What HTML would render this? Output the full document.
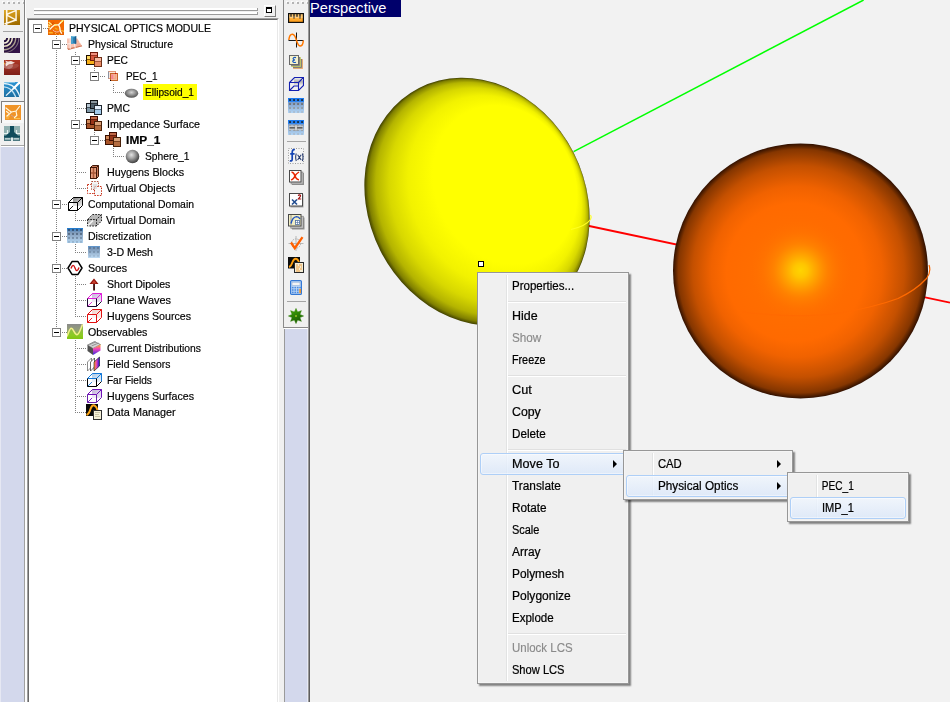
<!DOCTYPE html>
<html><head><meta charset="utf-8"><title>Physical Optics Module</title>
<style>
html,body{margin:0;padding:0}
body{width:950px;height:702px;position:relative;overflow:hidden;background:#f0f0f0;font-family:"Liberation Sans",sans-serif;font-size:11px;color:#000}
div,span,i,svg{position:absolute;box-sizing:border-box;display:block}
/* left toolbar */
#tb1{left:0;top:0;width:24px;height:147px;background:#f0f0f0}
#lav1{left:0;top:147px;width:24px;height:555px;background:#d3d8ec;border-left:1px solid #e6e8f3}
#edge1{left:24px;top:0;width:1px;height:702px;background:linear-gradient(to bottom,#848484 0,#848484 146px,#a0a0a0 147px,#a0a0a0 100%)}
#edge1b{left:25px;top:0;width:1px;height:702px;background:#fdfdfd}
#edge1c{left:26px;top:18px;width:1px;height:684px;background:#fdfdfd}
.grip i{top:2px;width:2px;height:2px;background:#b4b4b4;box-shadow:-1px -1px 0 #fbfbfb}
.tsep{height:1px;background:#a5a5a5}
.tic{width:16px;height:16px}
/* panel */
#panel{left:26px;top:0;width:257px;height:702px;background:#f0f0f0}
.gbar{left:34px;width:224px;height:3px;border-bottom:1px solid #9a9a9a;border-right:1px solid #9a9a9a;background:#fff}
#pbtn{left:264px;top:5px;width:12px;height:12px;border:1px solid;border-color:#fff #808080 #808080 #fff;background:#f0f0f0}
#pbtn i{left:1px;top:1px;width:6px;height:6px;border:1px solid #000;border-top-width:2px;background:#fff}
#treebox{left:27px;top:18px;width:252px;height:690px;border:1px solid #a0a0a0;border-right-color:#fff;background:#fff}
#treebox2{left:28px;top:19px;width:250px;height:690px;border:1px solid #696969;border-right-color:#e8e8e8;background:#fff}
#tree{left:0;top:0;width:283px;height:702px;overflow:hidden;will-change:transform}
.lbl{height:16px;line-height:16px;font-size:11px;white-space:nowrap;transform-origin:0 50%;padding:0 1px;-webkit-text-stroke:.18px #000}
.lbl.b{font-weight:bold}
.lbl.sel{background:#ffff00}
.ic{width:16px;height:16px}
.ic svg{left:0;top:0}
.bx{z-index:2;width:9px;height:9px;border:1px solid #808080;background:#fff}
.bx i{left:1px;top:3px;width:5px;height:1px;background:#000}
.vd{width:1px;background-image:repeating-linear-gradient(to bottom,#808080 0,#808080 1px,transparent 1px,transparent 2px)}
.hd{height:1px;background-image:repeating-linear-gradient(to right,#808080 0,#808080 1px,transparent 1px,transparent 2px)}
/* toolbar 2 */
#gap2{left:280px;top:0;width:3px;height:702px;background:#f0f0f0}
#edge2{left:283px;top:0;width:1px;height:328px;background:#8a8a8a}
#tb2{left:284px;top:0;width:25px;height:327px;background:#f0f0f0}
#tb2b{left:284px;top:327px;width:25px;height:1px;background:#8a8a8a}
#tb2c{left:284px;top:328px;width:25px;height:1px;background:#fff}
#lav2{left:284px;top:329px;width:24px;height:373px;background:#d3d8ec;border-left:1px solid #9a9a9a;border-right:1px solid #e6e9f5}
#edge3{left:308px;top:0;width:2px;height:702px;background:linear-gradient(to right,#989898 0,#989898 50%,#5e5e5e 50%,#5e5e5e 100%)}
/* viewport */
#view{left:310px;top:0;width:640px;height:702px;background:#f2f2f2;overflow:hidden}
#persp{left:0;top:0;width:91px;height:17px;background:#00006b;color:#fff;font-size:15px;line-height:16px;white-space:nowrap}
#persp span{left:0.4px;top:0;transform-origin:0 50%;transform:scaleX(.975)}
/* menus */
.menu{background:#f0f0f0;border:1px solid #979797;box-shadow:2px 2px 1.5px rgba(0,0,0,.45)}
.menu .in{left:0;top:0;right:0;bottom:0;border:1px solid #f5f5f5}
.gut{top:2px;bottom:2px;width:2px;border-left:1px solid #e2e3e3;border-right:1px solid #fff}
.msep{height:2px;border-top:1px solid #e0e0e0;border-bottom:1px solid #fff}
.hl{height:22px;border:1px solid #aecff7;border-radius:3px;background:linear-gradient(to bottom,rgba(240,246,254,.8) 0,rgba(219,232,250,.8) 100%);box-shadow:inset 0 0 0 1px rgba(255,255,255,.45)}
.mi{height:22px;line-height:22px;font-size:12px;white-space:nowrap;transform-origin:0 50%;padding:0 1px;color:#000;-webkit-text-stroke:.22px #000}
.mi.dis{color:#8a8a8a;-webkit-text-stroke:.15px #8a8a8a}
.arr{width:0;height:0;border-style:solid;border-width:4px 0 4px 4px;border-color:transparent transparent transparent #000}
#mtext{left:0;top:0;width:950px;height:702px;will-change:transform}

</style></head><body>
<div id="tb1"></div>
<div id="lav1"></div>
<div class="grip" style="left:0;top:0;width:24px;height:6px"><i style="left:3px"></i><i style="left:8px"></i><i style="left:13px"></i><i style="left:18px"></i><i style="left:23px;width:1px"></i></div>
<div class="tsep" style="left:3px;top:31px;width:20px"></div>
<div style="left:1px;top:101px;width:23px;height:22px;border-left:1px solid #808080;border-top:1px solid #808080;background:#f8f8f8"></div>
<div class="tsep" style="left:1px;top:145px;width:23px"></div>
<div style="left:1px;top:146px;width:23px;height:1px;background:#fff"></div>
<div id="edge1"></div><div id="edge1b"></div>
<div id="panel"></div>
<div class="gbar" style="top:8px"></div>
<div class="gbar" style="top:12px"></div>
<div id="pbtn"><i></i></div>
<div id="edge1c"></div><div id="treebox"></div><div id="treebox2"></div>
<div id="gap2"></div><div id="edge2"></div>
<div id="tb2"></div><div id="tb2b"></div><div id="tb2c"></div><div id="lav2"></div>
<div class="grip" style="left:284px;top:0;width:25px;height:6px"><i style="left:3px"></i><i style="left:8px"></i><i style="left:13px"></i><i style="left:18px"></i><i style="left:23px;width:1px"></i></div>
<div class="tsep" style="left:287px;top:141px;width:19px"></div>
<div class="tsep" style="left:287px;top:301px;width:19px"></div>
<div id="edge3"></div>

<svg class="tic" style="left:4px;top:10px;width:16px;height:15px" width="16" height="15" viewBox="0 0 16 15"><defs><linearGradient id="t1" x1="0" y1="0" x2=".3" y2="1"><stop offset="0" stop-color="#dca828"/><stop offset=".55" stop-color="#c08810"/><stop offset="1" stop-color="#a06c00"/></linearGradient></defs><rect width="16" height="16" fill="url(#t1)"/><path d="M2.7 0 V16 M2.5 4.6 L12 0.6 V10 L2.5 4.8 M12 10 L0.5 14" fill="none" stroke="#fff8e8" stroke-width="1.6"/><path d="M3.5 5 L11.3 1.6 V8.8 Z" fill="#d09818" opacity=".6"/></svg>
<svg class="tic" style="left:4px;top:38px;width:16px;height:15px" width="16" height="15" viewBox="0 0 16 15"><defs><linearGradient id="t2" x1="0" y1="0" x2="1" y2="1"><stop offset="0" stop-color="#20103c"/><stop offset="1" stop-color="#38164c"/></linearGradient><clipPath id="t2c"><rect width="16" height="16"/></clipPath></defs><rect width="16" height="16" fill="url(#t2)"/><g fill="none" clip-path="url(#t2c)"><circle cx="0" cy="0" r="2.2" fill="#f4f0e0" stroke="none"/><circle cx="0" cy="0" r="5" stroke="#f4efd8" stroke-width="1.7"/><circle cx="0" cy="0" r="8.3" stroke="#e6dec0" stroke-width="1.6"/><circle cx="0" cy="0" r="11.7" stroke="#aca090" stroke-width="1.4"/><circle cx="0" cy="0" r="14.8" stroke="#7a6a78" stroke-width="1.1"/></g></svg>
<svg class="tic" style="left:4px;top:60px;width:16px;height:15px" width="16" height="15" viewBox="0 0 16 15"><defs><linearGradient id="t3" x1="0" y1="0" x2="0" y2="1"><stop offset="0" stop-color="#ac3422"/><stop offset=".5" stop-color="#942c22"/><stop offset="1" stop-color="#7c1c18"/></linearGradient></defs><rect width="16" height="16" fill="url(#t3)"/><ellipse cx="4" cy="5.5" rx="5" ry="3.6" fill="#fff" opacity=".28"/><ellipse cx="9" cy="6.5" rx="6" ry="2.2" fill="#fff" opacity=".12" transform="rotate(-12 9 6.5)"/><path d="M0.8 0.6 L4 1.6 L7 1 L11 2.8 L8 4 L5 4.3 L2 6.5 L1.5 4 L2.5 2.4 Z" fill="#f8ece8" opacity=".9"/><path d="M0 3 L0.8 2.6 L0.8 4 L0 4.4 Z" fill="#e8b020"/></svg>
<svg class="tic" style="left:4px;top:82px;width:16px;height:15px" width="16" height="15" viewBox="0 0 16 15"><defs><linearGradient id="t4" x1="0" y1="0" x2="0" y2="1"><stop offset="0" stop-color="#2c94d4"/><stop offset="1" stop-color="#1c6c9c"/></linearGradient><clipPath id="t4c"><rect width="16" height="16"/></clipPath></defs><rect width="16" height="16" fill="url(#t4)"/><g fill="none" clip-path="url(#t4c)"><path d="M0 0.4 H11" stroke="#7cc0e4" stroke-width="1.2"/><path d="M0 1.5 Q9 2 12.7 8.2 T15.6 15.5" stroke="#e4f2fa" stroke-width="1.4"/><path d="M0 4.8 Q6.5 5.4 9.6 10.9 T11.6 15.8" stroke="#c4e2f2" stroke-width="1.3"/><path d="M16 -0.2 L9 7" stroke="#ffffff" stroke-width="2.2"/><path d="M9.5 6.5 L2 13.6" stroke="#f0f8fc" stroke-width="1.3"/></g></svg>
<svg class="tic" style="left:5px;top:105px;width:16px;height:15px" width="16" height="15" viewBox="0 0 16 15"><rect width="16" height="16" fill="#f09428"/><path d="M1 11 H5 M9 13.5 H15 M1 13 H4" stroke="#ffc850" stroke-width="1.2" opacity=".9"/><path d="M14.5 1.5 L11 6 L6.5 7 L2 11 M11 6 L11.8 10.5 L9.5 12.5 M1 3 L4 5.5 L6.5 7 M1.5 6.5 L3.5 8" stroke="#fff6e0" stroke-width="1.2" fill="none" stroke-linecap="round"/><path d="M6 10 L9 12" stroke="#d0a090" stroke-width="1"/></svg>
<svg class="tic" style="left:4px;top:126px;width:16px;height:15px" width="16" height="15" viewBox="0 0 16 15"><rect width="16" height="16" fill="#90b0b0"/><rect y="10" width="16" height="6" fill="#4c7880"/><path d="M6 0 H10 V6 L14 9.5 H16 V11.5 H0 V9.5 H2 L6 6 Z" fill="#104c5c"/><path d="M0 7.5 H3.5 V4 M16 7.5 H12.5 V4" fill="none" stroke="#e4f0f0" stroke-width="1.2"/><path d="M1 12.8 H6.5 M9.5 12.8 H15" stroke="#d8e8e8" stroke-width="1.3"/><rect x="7" y="11.5" width="2" height="4.5" fill="#e0ecec"/></svg>
<svg class="tic" style="left:288px;top:13px;width:16px;height:10px" width="16" height="10" viewBox="0 0 16 10"><defs><linearGradient id="r1" x1="0" y1="0" x2="0" y2="1"><stop offset="0" stop-color="#ffd488"/><stop offset=".45" stop-color="#ffb848"/><stop offset="1" stop-color="#ff9810"/></linearGradient></defs><rect x=".6" y=".6" width="14.8" height="8.8" fill="url(#r1)" stroke="#101010" stroke-width="1.2"/><path d="M3 1 V4 M6 1 V5.5 M9 1 V4 M12 1 V5.5" stroke="#101010" stroke-width="1.2"/><rect x="1.2" y="3.6" width="13.6" height="1" fill="#fff" opacity=".45"/></svg>
<svg class="tic" style="left:288px;top:32px;width:16px;height:16px" width="16" height="16" viewBox="0 0 16 16"><path d="M8.5 0.5 V15.5 M0.5 8.5 H15.5" stroke="#181818" stroke-width="1"/><path d="M0.8 8 Q1.5 2 4.5 2.2 Q7 2.5 8.5 8.5 Q10 14 12.5 14 Q15 13.5 15.3 8.5" fill="none" stroke="#ff7800" stroke-width="1.5"/></svg>
<svg class="tic" style="left:288px;top:54px;width:16px;height:16px" width="16" height="16" viewBox="0 0 16 16"><rect x="5.5" y="5.5" width="9" height="9" fill="#c8c0a8" stroke="#f08020" stroke-dasharray="1 1"/><rect x="3.5" y="3.5" width="9" height="9" fill="#d8d8b0" stroke="#a8b820" stroke-dasharray="1 1"/><rect x="1.5" y="1.5" width="9" height="9" fill="#f6f2cc" stroke="#686868"/><path d="M8 3.6 Q5.5 3 5 4.6 Q5 5.8 7 6 Q4.6 6.2 4.8 7.6 Q5.4 9 8 8.2" fill="none" stroke="#1858c0" stroke-width="1.2"/><path d="M11.5 3 V11.5 H3 M13.5 5 V13.5 H5" fill="none" stroke="#707070" stroke-width=".8"/></svg>
<svg class="tic" style="left:288px;top:76px;width:16px;height:16px" width="16" height="16" viewBox="0 0 16 16"><defs><linearGradient id="r4" x1="0" y1="0" x2="0" y2="1"><stop offset="0" stop-color="#f8f8f8"/><stop offset=".6" stop-color="#b0b0b0"/><stop offset="1" stop-color="#e8e8e8"/></linearGradient></defs><rect x="6" y="1" width="10" height="8" fill="url(#r4)"/><path d="M1.5 6.5 L6.5 1.5 H15.5 V9.5 L10.5 14.5 H1.5 Z M1.5 6.5 H10.5 V14.5 M10.5 6.5 L15.5 1.5 M1.5 14.5 L6 10 H10" fill="none" stroke="#1420b0" stroke-width="1.1"/></svg>
<svg class="tic" style="left:288px;top:98px;width:16px;height:15px" width="16" height="15" viewBox="0 0 16 15"><defs><linearGradient id="r5" x1="0" y1="0" x2="0" y2="1"><stop offset="0" stop-color="#1878f0"/><stop offset=".22" stop-color="#2c84f0"/><stop offset=".27" stop-color="#7c9cc8"/><stop offset=".6" stop-color="#98b8dc"/><stop offset="1" stop-color="#b8dcfc"/></linearGradient></defs><rect width="16" height="16" fill="url(#r5)"/><rect x="1.1" y="1.1" width="1.9" height="1.9" fill="#182838" opacity="0.9"/><rect x="5.1" y="1.1" width="1.9" height="1.9" fill="#182838" opacity="0.9"/><rect x="9.1" y="1.1" width="1.9" height="1.9" fill="#182838" opacity="0.9"/><rect x="13.1" y="1.1" width="1.9" height="1.9" fill="#182838" opacity="0.9"/><rect x="1.1" y="5.1" width="1.9" height="1.9" fill="#6c6458" opacity="0.75"/><rect x="5.1" y="5.1" width="1.9" height="1.9" fill="#6c6458" opacity="0.75"/><rect x="9.1" y="5.1" width="1.9" height="1.9" fill="#6c6458" opacity="0.75"/><rect x="13.1" y="5.1" width="1.9" height="1.9" fill="#6c6458" opacity="0.75"/><rect x="1.1" y="9.1" width="1.9" height="1.9" fill="#8c8880" opacity="0.6"/><rect x="5.1" y="9.1" width="1.9" height="1.9" fill="#8c8880" opacity="0.6"/><rect x="9.1" y="9.1" width="1.9" height="1.9" fill="#8c8880" opacity="0.6"/><rect x="13.1" y="9.1" width="1.9" height="1.9" fill="#8c8880" opacity="0.6"/><rect x="1.1" y="13.1" width="1.9" height="1.9" fill="#a8acb4" opacity="0.5"/><rect x="5.1" y="13.1" width="1.9" height="1.9" fill="#a8acb4" opacity="0.5"/><rect x="9.1" y="13.1" width="1.9" height="1.9" fill="#a8acb4" opacity="0.5"/><rect x="13.1" y="13.1" width="1.9" height="1.9" fill="#a8acb4" opacity="0.5"/></svg>
<svg class="tic" style="left:288px;top:120px;width:16px;height:15px" width="16" height="15" viewBox="0 0 16 15"><defs><linearGradient id="r6" x1="0" y1="0" x2="0" y2="1"><stop offset="0" stop-color="#1878f0"/><stop offset=".22" stop-color="#2c84f0"/><stop offset=".27" stop-color="#7c9cc8"/><stop offset=".6" stop-color="#98b8dc"/><stop offset="1" stop-color="#b8dcfc"/></linearGradient></defs><rect width="16" height="16" fill="url(#r6)"/><rect x="1.1" y="1.1" width="1.9" height="1.9" fill="#182838" opacity="0.9"/><rect x="5.1" y="1.1" width="1.9" height="1.9" fill="#182838" opacity="0.9"/><rect x="9.1" y="1.1" width="1.9" height="1.9" fill="#182838" opacity="0.9"/><rect x="13.1" y="1.1" width="1.9" height="1.9" fill="#182838" opacity="0.9"/><rect x="1.1" y="5.1" width="1.9" height="1.9" fill="#6c6458" opacity="0.75"/><rect x="5.1" y="5.1" width="1.9" height="1.9" fill="#6c6458" opacity="0.75"/><rect x="9.1" y="5.1" width="1.9" height="1.9" fill="#6c6458" opacity="0.75"/><rect x="13.1" y="5.1" width="1.9" height="1.9" fill="#6c6458" opacity="0.75"/><rect x="1.1" y="9.1" width="1.9" height="1.9" fill="#8c8880" opacity="0.6"/><rect x="5.1" y="9.1" width="1.9" height="1.9" fill="#8c8880" opacity="0.6"/><rect x="9.1" y="9.1" width="1.9" height="1.9" fill="#8c8880" opacity="0.6"/><rect x="13.1" y="9.1" width="1.9" height="1.9" fill="#8c8880" opacity="0.6"/><rect x="1.1" y="13.1" width="1.9" height="1.9" fill="#a8acb4" opacity="0.5"/><rect x="5.1" y="13.1" width="1.9" height="1.9" fill="#a8acb4" opacity="0.5"/><rect x="9.1" y="13.1" width="1.9" height="1.9" fill="#a8acb4" opacity="0.5"/><rect x="13.1" y="13.1" width="1.9" height="1.9" fill="#a8acb4" opacity="0.5"/><rect x="1" y="5.5" width="14" height="4.6" fill="#c4c8cc"/><rect x="1.5" y="7.2" width="13" height="1.3" fill="#484848"/><rect x="7" y="5" width="2" height="5.6" fill="#e8e8e8" stroke="#808080" stroke-width=".5"/></svg>
<svg class="tic" style="left:288px;top:148px;width:16px;height:16px" width="16" height="16" viewBox="0 0 16 16"><rect x=".5" y=".5" width="15" height="15" fill="#f4f4f4" stroke="#9c9c9c" stroke-dasharray="1 1.5"/><path d="M6.8 1.8 Q4.2 1 4.2 4.5 V11 Q4.2 13.5 1.8 12.8 M2.2 5.8 H6.6" fill="none" stroke="#1444b4" stroke-width="1.7"/><path d="M8.3 5.5 Q7 9 8.3 13 M14.4 5.5 Q15.6 9 14.4 13 M9.6 6.8 L13.2 12 M13.2 6.8 L9.6 12" fill="none" stroke="#283c70" stroke-width="1.1"/></svg>
<svg class="tic" style="left:288px;top:169px;width:17px;height:17px" width="17" height="17" viewBox="0 0 17 17"><rect x="4" y="4" width="12" height="12" fill="#909090"/><rect x="3" y="3" width="12" height="12" fill="#c4c4c4" stroke="#808080" stroke-width=".6"/><rect x="1.5" y="1.5" width="11.5" height="11.5" fill="#fff" stroke="#484848"/><path d="M3.5 3.3 Q5.5 3 7 7 Q8.5 11 11 10.6 M11 3 Q8 5 7 7 Q6 9.5 3.2 11.2" fill="none" stroke="#e82400" stroke-width="1.5"/></svg>
<svg class="tic" style="left:288px;top:192px;width:17px;height:16px" width="17" height="16" viewBox="0 0 17 16"><rect x="2.5" y="2.5" width="13" height="13" fill="#a8a8a8"/><rect x="1.5" y="1.5" width="13" height="12.5" fill="#fff" stroke="#484848"/><path d="M4 7.5 L9 12.5 M9 7.5 L4 12.5" stroke="#204c90" stroke-width="1.6"/><path d="M10.3 3.8 Q10.6 2.6 11.8 2.8 Q13 3.2 12.2 4.6 L10.4 7 H13.2" fill="none" stroke="#a01010" stroke-width="1.2"/></svg>
<svg class="tic" style="left:288px;top:213px;width:17px;height:17px" width="17" height="17" viewBox="0 0 17 17"><rect x="4" y="4.5" width="12.5" height="12" fill="#909090"/><rect x="2.8" y="3.2" width="12.5" height="12" fill="#c0c0c0" stroke="#787878" stroke-width=".6"/><rect x=".5" y="1.5" width="12.5" height="11.5" fill="#f2eec4" stroke="#484848"/><path d="M3 2.5 V12" stroke="#404040" stroke-dasharray="1 1"/><path d="M3 10.5 Q4.5 4 8.5 3.6 Q11 3.6 12 6" fill="none" stroke="#1c50c0" stroke-width="1.4"/><rect x="7.5" y="7.5" width="4" height="4" fill="#fff" stroke="#5070a0" stroke-width=".8"/><path d="M9.5 7.5 V11.5 M7.5 9.5 H11.5" stroke="#5070a0" stroke-width=".6"/></svg>
<svg class="tic" style="left:288px;top:235px;width:16px;height:16px" width="16" height="16" viewBox="0 0 16 16"><circle cx="8" cy="8.5" r="4.6" fill="none" stroke="#a8a8a8" stroke-width="1" stroke-dasharray="1.5 1"/><path d="M8 1 V16 M0.5 8.5 H15.5" stroke="#b0b0b0" stroke-width=".9"/><path d="M3 7.5 L6.8 13.2 L14.5 2.2" fill="none" stroke="#ff6000" stroke-width="2.3" stroke-linejoin="miter"/></svg>
<svg class="tic" style="left:288px;top:257px;width:16px;height:16px" width="16" height="16" viewBox="0 0 16 16"><rect x="0" y="0" width="12" height="11.5" fill="#0c0c0c"/><path d="M1 10 Q3 9.5 4.5 5 Q6 1 8.5 1.8 Q10.5 2.8 11.5 7" fill="none" stroke="#ffa010" stroke-width="1.9"/><rect x="6.5" y="5.5" width="9" height="10" fill="#f4ecd4" stroke="#282828"/><path d="M8 8 H10 M11 8 H14 M8 10 H12 M13 10 H14 M8 12 H11 M12 12 H14 M8 14 H12" stroke="#f0a040" stroke-width="1"/></svg>
<svg class="tic" style="left:290px;top:280px;width:12px;height:15px" width="12" height="15" viewBox="0 0 12 15"><rect x=".6" y=".6" width="10.8" height="13.8" rx="1" fill="#c4dcf8" stroke="#3478d4" stroke-width="1.2"/><rect x="2" y="2.2" width="8" height="3.4" fill="#f4f4f4" stroke="#8cacd8" stroke-width=".6"/><g fill="#4c8ce0"><rect x="1.9" y="6.8" width="1.7" height="1.6"/><rect x="4.4" y="6.8" width="1.7" height="1.6"/><rect x="6.9" y="6.8" width="1.7" height="1.6"/><rect x="1.9" y="9.2" width="1.7" height="1.6"/><rect x="4.4" y="9.2" width="1.7" height="1.6"/><rect x="6.9" y="9.2" width="1.7" height="1.6"/><rect x="1.9" y="11.6" width="1.7" height="1.6"/><rect x="4.4" y="11.6" width="1.7" height="1.6"/><rect x="6.9" y="11.6" width="1.7" height="1.6"/></g><rect x="9.3" y="8.8" width="1.6" height="4.4" fill="#f09020"/><rect x="9.3" y="6.8" width="1.6" height="1.4" fill="#4c8ce0"/></svg>
<svg class="tic" style="left:288px;top:308px;width:16px;height:16px" width="16" height="16" viewBox="0 0 16 16"><defs><linearGradient id="r14" x1="0" y1="0" x2=".4" y2="1"><stop offset="0" stop-color="#58bc08"/><stop offset=".5" stop-color="#2c8404"/><stop offset="1" stop-color="#1c5c04"/></linearGradient></defs><polygon points="8.00,0.40 9.61,4.12 13.37,2.63 11.88,6.39 15.60,8.00 11.88,9.61 13.37,13.37 9.61,11.88 8.00,15.60 6.39,11.88 2.63,13.37 4.12,9.61 0.40,8.00 4.12,6.39 2.63,2.63 6.39,4.12" fill="url(#r14)" stroke="#2c7c08" stroke-width=".5"/><circle cx="8" cy="8" r=".8" fill="#e8f040"/></svg>
<div id="tree">
<div class="ic" style="left:48px;top:20px;height:15px;overflow:hidden"><svg width="16" height="16" viewBox="0 0 16 16"><defs><linearGradient id="rg" x1="0" y1="0" x2="0" y2="1"><stop offset="0" stop-color="#f46800"/><stop offset=".7" stop-color="#f06a04"/><stop offset="1" stop-color="#e46000"/></linearGradient></defs><rect x="0" y="0" width="16" height="15" fill="url(#rg)"/><path d="M0.5 12.3 Q2.8 11 5.2 12.4 L5 13.4 H0.8 Z" fill="#ffb828"/><path d="M13 10.2 L16 10.8 V11.8 L13.2 11 Z" fill="#ffd040"/><path d="M7 13 L8.4 14.6 M11 13.8 L11.6 14.9" stroke="#ffc030" stroke-width="1"/><circle cx="8" cy="9.2" r="3.2" fill="#f87808" opacity=".8"/><path d="M7 8 L9.5 9.6" stroke="#f0b020" stroke-width="1.2"/><path d="M0.6 2 L3.8 4.8 M0.3 4.6 L2.2 6 M0.2 7 L1.6 8" stroke="#fff08a" stroke-width="1.3" fill="none"/><path d="M3.6 2.6 L5.2 4.2 M5.2 2.4 L6.4 3.6" stroke="#d04800" stroke-width="1" fill="none"/><path d="M4.8 10 Q6.5 11.8 8.5 12 Q10.5 12.2 11.5 11" stroke="#f4b4a4" stroke-width="1" fill="none"/><path d="M15 0.2 L10.6 4.7 L6.6 5 L4.3 6.8 L1.6 9.6 M10.6 4.7 L11.8 7.6 L12.2 11 L13.8 13.6" stroke="#fffbe8" stroke-width="1.35" fill="none" stroke-linejoin="round"/><path d="M15.4 0 L13 2.4 M6.4 4.9 L8.6 4.9" stroke="#fff060" stroke-width="1.1" fill="none"/></svg></div>
<span class="lbl" style="left:67.5px;top:20px;transform:scaleX(0.9590)">PHYSICAL OPTICS MODULE</span>
<div class="bx" style="left:33px;top:24px"><i></i></div>
<div class="ic" style="left:67px;top:36px;height:16px;overflow:hidden"><svg width="16" height="16" viewBox="0 0 16 16"><path d="M0 2.4 H10.4 L15.2 10.3 L1.2 14 L0 11.8 Z" fill="#f8c4b4"/><path d="M0 11.8 L1.2 14 L15.2 10.3 L14.6 9.3 L1.2 12.6 Z" fill="#d07858"/><path d="M0 8 L13 6.6 M6.5 2.4 L8.2 12 M3 2.4 L3.2 13" stroke="#fdece6" stroke-width="1" fill="none"/><path d="M9.5 2.6 L14.5 9.6 L10 10.5 L8 3 Z" fill="#f0a890" opacity=".7"/><rect x="4" y="0" width="5.2" height="7.7" fill="#2c80b4"/><rect x="4" y="0" width="2" height="7.7" fill="#4aa0cc"/><rect x="7.8" y="0" width="1.4" height="7.7" fill="#1c5c8c"/><path d="M4 .6 L6.6 -.3 L9.2 .6 L6.6 1.3 Z" fill="#7cc0e0"/></svg></div>
<span class="lbl" style="left:86.5px;top:36px;transform:scaleX(0.9594)">Physical Structure</span>
<div class="bx" style="left:52px;top:40px"><i></i></div>
<div class="ic" style="left:86px;top:52px;height:16px;overflow:hidden"><svg width="16" height="16" viewBox="0 0 16 16"><rect x="0.5" y="3.5" width="8" height="9" fill="#f8b018" stroke="#201000" stroke-width="1"/><rect x="1" y="4" width="7" height="3" fill="#ffd860"/><rect x="1" y="7" width="7" height="1" fill="#201000" opacity=".55"/><rect x="4.5" y="0.5" width="7" height="8" fill="#d85840" stroke="#701808" stroke-width="1"/><rect x="5" y="1" width="6" height="2" fill="#f09080"/><rect x="5" y="3" width="6" height="1" fill="#701808" opacity=".55"/><rect x="8.5" y="5.5" width="7" height="9" fill="#e88c68" stroke="#703018" stroke-width="1"/><rect x="9" y="6" width="6" height="3" fill="#f8b8a0"/><rect x="9" y="9" width="6" height="1" fill="#703018" opacity=".55"/></svg></div>
<span class="lbl" style="left:105.5px;top:52px;transform:scaleX(0.9295)">PEC</span>
<div class="bx" style="left:71px;top:56px"><i></i></div>
<div class="ic" style="left:105px;top:68px;height:16px;overflow:hidden"><svg width="16" height="16" viewBox="0 0 16 16"><rect x="3.5" y="3.5" width="7" height="7" fill="#fbe4d8" stroke="#e09878"/><path d="M3.5 3.5 V10.5" stroke="#8c94a4"/><rect x="5.5" y="5.5" width="7" height="7" fill="#f4a888" fill-opacity=".85" stroke="#c46428"/><rect x="6.2" y="6.5" width="2" height="4.5" fill="#f87890" opacity=".8"/><rect x="5" y="12" width="1" height="1" fill="#100000"/><rect x="10" y="5" width="1.2" height="1" fill="#d01010"/></svg></div>
<span class="lbl" style="left:124.9px;top:68px;transform:scaleX(0.9067)">PEC_1</span>
<div class="bx" style="left:90px;top:72px"><i></i></div>
<div class="ic" style="left:124px;top:84px;height:16px;overflow:hidden"><svg width="16" height="16" viewBox="0 0 16 16"><defs><radialGradient id="eg" cx=".5" cy=".4" r=".62"><stop offset="0" stop-color="#d4d4d4"/><stop offset=".5" stop-color="#909090"/><stop offset="1" stop-color="#484848"/></radialGradient></defs><ellipse cx="7.5" cy="9.3" rx="6.7" ry="4.5" fill="url(#eg)"/></svg></div>
<div style="left:143px;top:84px;width:54px;height:16px;background:#ffff00"></div>
<span class="lbl" style="left:143.5px;top:84px;transform:scaleX(0.9214)">Ellipsoid_1</span>
<div class="ic" style="left:86px;top:100px;height:16px;overflow:hidden"><svg width="16" height="16" viewBox="0 0 16 16"><rect x="0.5" y="3.5" width="8" height="9" fill="#8098a8" stroke="#181c20" stroke-width="1"/><rect x="1" y="4" width="7" height="3" fill="#b8c8d4"/><rect x="1" y="7" width="7" height="1" fill="#181c20" opacity=".55"/><rect x="4.5" y="0.5" width="7" height="8" fill="#50606c" stroke="#101418" stroke-width="1"/><rect x="5" y="1" width="6" height="2" fill="#8c98a0"/><rect x="5" y="3" width="6" height="1" fill="#101418" opacity=".55"/><rect x="8.5" y="5.5" width="7" height="9" fill="#a4cced" stroke="#202830" stroke-width="1"/><rect x="9" y="6" width="6" height="3" fill="#e4f0fc"/><rect x="9" y="9" width="6" height="1" fill="#202830" opacity=".55"/></svg></div>
<span class="lbl" style="left:105.5px;top:100px;transform:scaleX(0.9423)">PMC</span>
<div class="ic" style="left:86px;top:116px;height:16px;overflow:hidden"><svg width="16" height="16" viewBox="0 0 16 16"><rect x="0.5" y="3.5" width="8" height="9" fill="#a85428" stroke="#381000" stroke-width="1"/><rect x="1" y="4" width="7" height="3" fill="#d08858"/><rect x="1" y="7" width="7" height="1" fill="#381000" opacity=".55"/><rect x="4.5" y="0.5" width="7" height="8" fill="#983418" stroke="#400c00" stroke-width="1"/><rect x="5" y="1" width="6" height="2" fill="#c06848"/><rect x="5" y="3" width="6" height="1" fill="#400c00" opacity=".55"/><rect x="8.5" y="5.5" width="7" height="9" fill="#b46c40" stroke="#482008" stroke-width="1"/><rect x="9" y="6" width="6" height="3" fill="#d8a078"/><rect x="9" y="9" width="6" height="1" fill="#482008" opacity=".55"/></svg></div>
<span class="lbl" style="left:105.5px;top:116px;transform:scaleX(0.9757)">Impedance Surface</span>
<div class="bx" style="left:71px;top:120px"><i></i></div>
<div class="ic" style="left:105px;top:132px;height:16px;overflow:hidden"><svg width="16" height="16" viewBox="0 0 16 16"><rect x="0.5" y="3.5" width="8" height="9" fill="#a85428" stroke="#381000" stroke-width="1"/><rect x="1" y="4" width="7" height="3" fill="#d08858"/><rect x="1" y="7" width="7" height="1" fill="#381000" opacity=".55"/><rect x="4.5" y="0.5" width="7" height="8" fill="#983418" stroke="#400c00" stroke-width="1"/><rect x="5" y="1" width="6" height="2" fill="#c06848"/><rect x="5" y="3" width="6" height="1" fill="#400c00" opacity=".55"/><rect x="8.5" y="5.5" width="7" height="9" fill="#b46c40" stroke="#482008" stroke-width="1"/><rect x="9" y="6" width="6" height="3" fill="#d8a078"/><rect x="9" y="9" width="6" height="1" fill="#482008" opacity=".55"/></svg></div>
<span class="lbl b" style="left:124.9px;top:132px;transform:scaleX(1.0813)">IMP_1</span>
<div class="bx" style="left:90px;top:136px"><i></i></div>
<div class="ic" style="left:124px;top:148px;height:16px;overflow:hidden"><svg width="16" height="16" viewBox="0 0 16 16"><defs><radialGradient id="sg" cx=".42" cy=".38" r=".62"><stop offset="0" stop-color="#e4e4e4"/><stop offset=".45" stop-color="#a0a0a0"/><stop offset="1" stop-color="#404040"/></radialGradient></defs><circle cx="8.5" cy="8.5" r="6.8" fill="url(#sg)"/></svg></div>
<span class="lbl" style="left:143.5px;top:148px;transform:scaleX(0.9354)">Sphere_1</span>
<div class="ic" style="left:86px;top:164px;height:16px;overflow:hidden"><svg width="16" height="16" viewBox="0 0 16 16"><path d="M4.5 3.5 L6.5 1.5 H12.5 V12.5 L10.5 14.5 H4.5 Z" fill="#c87858" stroke="#401808"/><rect x="4.5" y="3.5" width="6" height="11" fill="#e8a080" stroke="#401808"/><path d="M7.5 4 V14 M5 9 H10" stroke="#a85838" stroke-width="1.6"/><path d="M10.5 3.5 L12.5 1.5" stroke="#401808"/></svg></div>
<span class="lbl" style="left:105.5px;top:164px;transform:scaleX(0.9772)">Huygens Blocks</span>
<div class="ic" style="left:86px;top:180px;height:16px;overflow:hidden"><svg width="16" height="16" viewBox="0 0 16 16"><rect x="1.5" y="4.5" width="8" height="9" fill="#fff" stroke="#c83018" stroke-dasharray="1.5 1.2"/><rect x="5.5" y="1.5" width="7" height="8" fill="#f4f4f4" stroke="#b05038" stroke-dasharray="1.5 1.2"/><rect x="8.5" y="6.5" width="7" height="9" fill="#fafafa" stroke="#c83018" stroke-dasharray="1.5 1.2"/><rect x="7" y="4" width="4" height="5" fill="#d8d8d8" opacity=".7"/></svg></div>
<span class="lbl" style="left:104.9px;top:180px;transform:scaleX(0.9712)">Virtual Objects</span>
<div class="ic" style="left:67px;top:196px;height:16px;overflow:hidden"><svg width="16" height="16" viewBox="0 0 16 16"><defs><linearGradient id="g40656" x1="0" y1="0" x2="1" y2="1"><stop offset="0" stop-color="#7c7c7c"/><stop offset="1" stop-color="#f4f4f4"/></linearGradient></defs><rect x="6" y="1" width="10" height="9" fill="url(#g40656)"/><rect x="1.5" y="6.5" width="9" height="8" fill="#fff" fill-opacity=".55" stroke="none"/><path d="M1.5 6.5 L6.5 1.5 H15.5 V9.5 M10.5 6.5 L15.5 1.5 M1.5 6.5 H10.5" fill="none" stroke="#000"/><path d="M1.5 14.5 L6 10" fill="none" stroke="#000" stroke-width=".9"/><path d="M1.5 6.5 V14.5 H10.5 V6.5 M10.5 14.5 L15.5 9.5" fill="none" stroke="#000"/></svg></div>
<span class="lbl" style="left:86.5px;top:196px;transform:scaleX(0.9478)">Computational Domain</span>
<div class="bx" style="left:52px;top:200px"><i></i></div>
<div class="ic" style="left:86px;top:212px;height:16px;overflow:hidden"><svg width="16" height="16" viewBox="0 0 16 16"><path d="M1.5 7.5 L6.5 2.5 H15.5 V9 L10.5 14 H1.5 Z" fill="#b8b8b8"/><path d="M6.5 2.5 H15.5 V9 L10.5 14 H1.5 V7.5 Z M1.5 7.5 H10.5 L15.5 2.5 M10.5 7.5 V14" fill="none" stroke="#202020" stroke-dasharray="1.6 1.2"/><path d="M2 13.5 L7 8.5" stroke="#f4f4f4" stroke-width="1.6"/></svg></div>
<span class="lbl" style="left:104.9px;top:212px;transform:scaleX(0.9626)">Virtual Domain</span>
<div class="ic" style="left:67px;top:228px;height:15px;overflow:hidden"><svg width="16" height="16" viewBox="0 0 16 16"><defs><linearGradient id="m89523" x1="0" y1="0" x2="0" y2="1"><stop offset="0" stop-color="#1878d0"/><stop offset=".25" stop-color="#7c98b8"/><stop offset=".6" stop-color="#9cb8d4"/><stop offset="1" stop-color="#b8dcf8"/></linearGradient></defs><rect x="0" y="0" width="16" height="16" fill="url(#m89523)"/><rect x="1.1" y="1.1" width="1.8" height="1.8" fill="#28384c" opacity="0.75"/><rect x="5.1" y="1.1" width="1.8" height="1.8" fill="#28384c" opacity="0.75"/><rect x="9.1" y="1.1" width="1.8" height="1.8" fill="#28384c" opacity="0.75"/><rect x="13.1" y="1.1" width="1.8" height="1.8" fill="#28384c" opacity="0.75"/><rect x="1.1" y="5.1" width="1.8" height="1.8" fill="#28384c" opacity="0.57"/><rect x="5.1" y="5.1" width="1.8" height="1.8" fill="#28384c" opacity="0.57"/><rect x="9.1" y="5.1" width="1.8" height="1.8" fill="#28384c" opacity="0.57"/><rect x="13.1" y="5.1" width="1.8" height="1.8" fill="#28384c" opacity="0.57"/><rect x="1.1" y="9.1" width="1.8" height="1.8" fill="#28384c" opacity="0.38"/><rect x="5.1" y="9.1" width="1.8" height="1.8" fill="#28384c" opacity="0.38"/><rect x="9.1" y="9.1" width="1.8" height="1.8" fill="#28384c" opacity="0.38"/><rect x="13.1" y="9.1" width="1.8" height="1.8" fill="#28384c" opacity="0.38"/><rect x="1.1" y="13.1" width="1.8" height="1.8" fill="#28384c" opacity="0.20"/><rect x="5.1" y="13.1" width="1.8" height="1.8" fill="#28384c" opacity="0.20"/><rect x="9.1" y="13.1" width="1.8" height="1.8" fill="#28384c" opacity="0.20"/><rect x="13.1" y="13.1" width="1.8" height="1.8" fill="#28384c" opacity="0.20"/></svg></div>
<span class="lbl" style="left:86.5px;top:228px;transform:scaleX(0.9611)">Discretization</span>
<div class="bx" style="left:52px;top:232px"><i></i></div>
<div class="ic" style="left:86px;top:244px;height:16px;overflow:hidden"><svg width="16" height="16" viewBox="0 0 16 16"><defs><linearGradient id="m9842" x1="0" y1="0" x2="0" y2="1"><stop offset="0" stop-color="#5c94cc"/><stop offset=".25" stop-color="#7c98b8"/><stop offset=".6" stop-color="#9cb8d4"/><stop offset="1" stop-color="#c0dcf4"/></linearGradient></defs><rect x="2" y="2" width="12" height="12" fill="url(#m9842)"/><rect x="3.1" y="3.1" width="1.8" height="1.8" fill="#586c84" opacity="0.75"/><rect x="7.1" y="3.1" width="1.8" height="1.8" fill="#586c84" opacity="0.75"/><rect x="11.1" y="3.1" width="1.8" height="1.8" fill="#586c84" opacity="0.75"/><rect x="3.1" y="7.1" width="1.8" height="1.8" fill="#586c84" opacity="0.47"/><rect x="7.1" y="7.1" width="1.8" height="1.8" fill="#586c84" opacity="0.47"/><rect x="11.1" y="7.1" width="1.8" height="1.8" fill="#586c84" opacity="0.47"/><rect x="3.1" y="11.1" width="1.8" height="1.8" fill="#586c84" opacity="0.20"/><rect x="7.1" y="11.1" width="1.8" height="1.8" fill="#586c84" opacity="0.20"/><rect x="11.1" y="11.1" width="1.8" height="1.8" fill="#586c84" opacity="0.20"/></svg></div>
<span class="lbl" style="left:105.9px;top:244px;transform:scaleX(0.9660)">3-D Mesh</span>
<div class="ic" style="left:67px;top:260px;height:16px;overflow:hidden"><svg width="16" height="16" viewBox="0 0 16 16"><path d="M5 1.6 H11 L15 8 L11 14.4 H5 L1 8 Z" fill="#fff" stroke="#000" stroke-width="1.5" stroke-linejoin="round"/><path d="M4 8.5 Q6 2.5 8 8 T12 7.5" fill="none" stroke="#d01010" stroke-width="1.4"/></svg></div>
<span class="lbl" style="left:86.5px;top:260px;transform:scaleX(0.9680)">Sources</span>
<div class="bx" style="left:52px;top:264px"><i></i></div>
<div class="ic" style="left:86px;top:276px;height:16px;overflow:hidden"><svg width="16" height="16" viewBox="0 0 16 16"><path d="M8 2.5 L12.5 8 H3.5 Z" fill="#901008"/><path d="M8 4 L10.5 7.5 H5.5 Z" fill="#c84030"/><rect x="7.2" y="8" width="1.7" height="6.5" fill="#300000"/></svg></div>
<span class="lbl" style="left:105.5px;top:276px;transform:scaleX(0.9608)">Short Dipoles</span>
<div class="ic" style="left:86px;top:292px;height:16px;overflow:hidden"><svg width="16" height="16" viewBox="0 0 16 16"><defs><linearGradient id="g25096" x1="0" y1="0" x2="1" y2="1"><stop offset="0" stop-color="#c8b4dc"/><stop offset="1" stop-color="#f0e8f8"/></linearGradient></defs><rect x="6" y="1" width="10" height="9" fill="url(#g25096)"/><rect x="1.5" y="6.5" width="9" height="8" fill="#fff" fill-opacity=".55" stroke="none"/><path d="M1.5 6.5 L6.5 1.5 H15.5 V9.5 M10.5 6.5 L15.5 1.5 M1.5 6.5 H10.5" fill="none" stroke="#e020d8"/><path d="M1.5 14.5 L6 10" fill="none" stroke="#e020d8" stroke-width=".9"/><path d="M1.5 6.5 V14.5 H10.5 V6.5 M10.5 14.5 L15.5 9.5" fill="none" stroke="#180830"/></svg></div>
<span class="lbl" style="left:105.5px;top:292px;transform:scaleX(0.9952)">Plane Waves</span>
<div class="ic" style="left:86px;top:308px;height:16px;overflow:hidden"><svg width="16" height="16" viewBox="0 0 16 16"><defs><linearGradient id="g55425" x1="0" y1="0" x2="1" y2="1"><stop offset="0" stop-color="#f0d0c8"/><stop offset="1" stop-color="#fdf4f0"/></linearGradient></defs><rect x="6" y="1" width="10" height="9" fill="url(#g55425)"/><rect x="1.5" y="6.5" width="9" height="8" fill="#fff" fill-opacity=".55" stroke="none"/><path d="M1.5 6.5 L6.5 1.5 H15.5 V9.5 M10.5 6.5 L15.5 1.5 M1.5 6.5 H10.5" fill="none" stroke="#e01010"/><path d="M1.5 14.5 L6 10" fill="none" stroke="#e01010" stroke-width=".9"/><path d="M1.5 6.5 V14.5 H10.5 V6.5 M10.5 14.5 L15.5 9.5" fill="none" stroke="#e01010"/></svg></div>
<span class="lbl" style="left:105.5px;top:308px;transform:scaleX(0.9682)">Huygens Sources</span>
<div class="ic" style="left:67px;top:324px;height:15px;overflow:hidden"><svg width="16" height="16" viewBox="0 0 16 16"><defs><linearGradient id="og" x1="0" y1="0" x2="0" y2="1"><stop offset="0" stop-color="#8a8a8a"/><stop offset=".4" stop-color="#94a078"/><stop offset=".75" stop-color="#88c424"/><stop offset="1" stop-color="#74b400"/></linearGradient></defs><rect width="16" height="15" fill="url(#og)"/><path d="M0 13 C1.5 9.5 2.5 5 4.3 5 C6.5 5 7.5 11.4 10 11.4 C12 11.4 13.5 5.5 16 1 V15 H0 Z" fill="#8ed020" opacity=".6"/><path d="M0 12.5 C1.5 9 2.5 4.3 4.3 4.3 C6.5 4.3 7.5 10.7 10 10.7 C12 10.7 13.5 5 15.6 0.4" fill="none" stroke="#f4f08c" stroke-width="1.5"/></svg></div>
<span class="lbl" style="left:86.5px;top:324px;transform:scaleX(0.9627)">Observables</span>
<div class="bx" style="left:52px;top:328px"><i></i></div>
<div class="ic" style="left:86px;top:340px;height:16px;overflow:hidden"><svg width="16" height="16" viewBox="0 0 16 16"><defs><linearGradient id="cg" x1="0" y1="0" x2="0" y2="1"><stop offset="0" stop-color="#ffb020"/><stop offset=".45" stop-color="#f040c0"/><stop offset="1" stop-color="#3030e0"/></linearGradient></defs><path d="M1.5 5 L8.5 1.5 L14.5 4.5 L7 8.5 Z" fill="#d4d4d4" stroke="#606060" stroke-width=".6"/><path d="M3.5 4.6 L10 1.8 M5.5 6 L12.5 3" stroke="#808080" stroke-width=".8"/><path d="M1.5 5 L7 8.5 V15 L1.5 11 Z" fill="#505050"/><path d="M7 8.5 L14.5 4.5 V10.5 L7 15 Z" fill="url(#cg)"/></svg></div>
<span class="lbl" style="left:105.5px;top:340px;transform:scaleX(0.9379)">Current Distributions</span>
<div class="ic" style="left:86px;top:356px;height:16px;overflow:hidden"><svg width="16" height="16" viewBox="0 0 16 16"><defs><linearGradient id="fg" x1="0" y1="0" x2="1" y2="0"><stop offset="0" stop-color="#ffa020"/><stop offset=".5" stop-color="#e040c0"/><stop offset="1" stop-color="#1010d0"/></linearGradient></defs><path d="M1.5 6 L5.5 2 V11 L1.5 15 Z" fill="#fff" stroke="#707070" stroke-width=".8"/><path d="M4.5 6 L8.5 2 V11 L4.5 15 Z" fill="#fff" stroke="#404040" stroke-width=".8"/><path d="M8 6 L13.5 1 V10 L8 15 Z" fill="url(#fg)" stroke="#101010" stroke-width=".6"/></svg></div>
<span class="lbl" style="left:105.5px;top:356px;transform:scaleX(0.9432)">Field Sensors</span>
<div class="ic" style="left:86px;top:372px;height:16px;overflow:hidden"><svg width="16" height="16" viewBox="0 0 16 16"><defs><linearGradient id="g78241" x1="0" y1="0" x2="1" y2="1"><stop offset="0" stop-color="#a8c8e8"/><stop offset="1" stop-color="#eef6fc"/></linearGradient></defs><rect x="6" y="1" width="10" height="9" fill="url(#g78241)"/><rect x="1.5" y="6.5" width="9" height="8" fill="#fff" fill-opacity=".55" stroke="none"/><path d="M1.5 6.5 L6.5 1.5 H15.5 V9.5 M10.5 6.5 L15.5 1.5 M1.5 6.5 H10.5" fill="none" stroke="#1478d8"/><path d="M1.5 14.5 L6 10" fill="none" stroke="#1478d8" stroke-width=".9"/><path d="M1.5 6.5 V14.5 H10.5 V6.5 M10.5 14.5 L15.5 9.5" fill="none" stroke="#000"/></svg></div>
<span class="lbl" style="left:105.5px;top:372px;transform:scaleX(0.9205)">Far Fields</span>
<div class="ic" style="left:86px;top:388px;height:16px;overflow:hidden"><svg width="16" height="16" viewBox="0 0 16 16"><defs><linearGradient id="g44837" x1="0" y1="0" x2="1" y2="1"><stop offset="0" stop-color="#c0b0d8"/><stop offset="1" stop-color="#f0ecf8"/></linearGradient></defs><rect x="6" y="1" width="10" height="9" fill="url(#g44837)"/><rect x="1.5" y="6.5" width="9" height="8" fill="#fff" fill-opacity=".55" stroke="none"/><path d="M1.5 6.5 L6.5 1.5 H15.5 V9.5 M10.5 6.5 L15.5 1.5 M1.5 6.5 H10.5" fill="none" stroke="#7010b8"/><path d="M1.5 14.5 L6 10" fill="none" stroke="#7010b8" stroke-width=".9"/><path d="M1.5 6.5 V14.5 H10.5 V6.5 M10.5 14.5 L15.5 9.5" fill="none" stroke="#6820a8"/></svg></div>
<span class="lbl" style="left:105.5px;top:388px;transform:scaleX(0.9686)">Huygens Surfaces</span>
<div class="ic" style="left:86px;top:404px;height:16px;overflow:hidden"><svg width="16" height="16" viewBox="0 0 16 16"><rect x="0" y="0" width="12" height="12" fill="#080808"/><path d="M0.5 11 Q3 10 4.5 5 Q6 0.5 8.5 1.5 Q10.5 2.5 11.5 6" fill="none" stroke="#ffa818" stroke-width="2"/><rect x="7.5" y="6.5" width="8" height="9" fill="#f4f0d8" stroke="#303030"/><path d="M9 8.5 H14 M9 10.5 H13 M9 12.5 H14" stroke="#b8b090" stroke-width=".7"/></svg></div>
<span class="lbl" style="left:105.5px;top:404px;transform:scaleX(0.9852)">Data Manager</span>
<div class="hd" style="left:43px;top:28px;width:5px"></div>
<div class="vd" style="left:56px;top:36px;height:297px"></div>
<div class="hd" style="left:62px;top:44px;width:5px"></div>
<div class="vd" style="left:75px;top:52px;height:137px"></div>
<div class="hd" style="left:81px;top:60px;width:5px"></div>
<div class="vd" style="left:94px;top:68px;height:9px"></div>
<div class="hd" style="left:100px;top:76px;width:5px"></div>
<div class="vd" style="left:113px;top:84px;height:9px"></div>
<div class="hd" style="left:113px;top:92px;width:11px"></div>
<div class="hd" style="left:75px;top:108px;width:11px"></div>
<div class="hd" style="left:81px;top:124px;width:5px"></div>
<div class="vd" style="left:94px;top:132px;height:9px"></div>
<div class="hd" style="left:100px;top:140px;width:5px"></div>
<div class="vd" style="left:113px;top:148px;height:9px"></div>
<div class="hd" style="left:113px;top:156px;width:11px"></div>
<div class="hd" style="left:75px;top:172px;width:11px"></div>
<div class="hd" style="left:75px;top:188px;width:11px"></div>
<div class="hd" style="left:62px;top:204px;width:5px"></div>
<div class="vd" style="left:75px;top:212px;height:9px"></div>
<div class="hd" style="left:75px;top:220px;width:11px"></div>
<div class="hd" style="left:62px;top:236px;width:5px"></div>
<div class="vd" style="left:75px;top:244px;height:9px"></div>
<div class="hd" style="left:75px;top:252px;width:11px"></div>
<div class="hd" style="left:62px;top:268px;width:5px"></div>
<div class="vd" style="left:75px;top:276px;height:41px"></div>
<div class="hd" style="left:75px;top:284px;width:11px"></div>
<div class="hd" style="left:75px;top:300px;width:11px"></div>
<div class="hd" style="left:75px;top:316px;width:11px"></div>
<div class="hd" style="left:62px;top:332px;width:5px"></div>
<div class="vd" style="left:75px;top:340px;height:73px"></div>
<div class="hd" style="left:75px;top:348px;width:11px"></div>
<div class="hd" style="left:75px;top:364px;width:11px"></div>
<div class="hd" style="left:75px;top:380px;width:11px"></div>
<div class="hd" style="left:75px;top:396px;width:11px"></div>
<div class="hd" style="left:75px;top:412px;width:11px"></div>
</div>
<div id="view">
<div id="persp"><span>Perspective</span></div>
<svg width="640" height="702" viewBox="310 0 640 702" style="left:0;top:0">
<defs>
<radialGradient id="gy" cx="0.5" cy="0.5" r="0.5" fx="0.916" fy="0.474">
<stop offset="0" stop-color="#ffff00"/><stop offset="0.64" stop-color="#ffff00"/><stop offset="0.77" stop-color="#f2f200"/><stop offset="0.87" stop-color="#d8d800"/><stop offset="0.94" stop-color="#b4b400"/><stop offset="0.98" stop-color="#808000"/><stop offset="1" stop-color="#404000"/>
</radialGradient>
<radialGradient id="go" cx="0.5" cy="0.5" r="0.5" fx="0.455" fy="0.51">
<stop offset="0" stop-color="#ff7200"/><stop offset="0.54" stop-color="#ff6a00"/><stop offset="0.67" stop-color="#f06200"/><stop offset="0.83" stop-color="#c45000"/><stop offset="0.955" stop-color="#853600"/><stop offset="1" stop-color="#301000"/>
</radialGradient>
<radialGradient id="gh" cx="0.5" cy="0.5" r="0.5">
<stop offset="0" stop-color="#ffd400"/><stop offset="0.14" stop-color="#ffc800" stop-opacity=".97"/><stop offset="0.32" stop-color="#ffac00" stop-opacity=".85"/><stop offset="0.55" stop-color="#ff8c00" stop-opacity=".6"/><stop offset="0.78" stop-color="#ff7a00" stop-opacity=".3"/><stop offset="1" stop-color="#ff7200" stop-opacity="0"/>
</radialGradient>
</defs>
<line x1="573.6" y1="151.7" x2="863.6" y2="0" stroke="#00ff00" stroke-width="1.5"/>
<line x1="588" y1="225.7" x2="950" y2="302.6" stroke="#ff0000" stroke-width="1.9"/>
<g transform="translate(477 201.8) rotate(-27)"><ellipse cx="0" cy="0" rx="108.4" ry="127.7" fill="url(#gy)"/></g>
<circle cx="800.5" cy="271" r="127.5" fill="url(#go)"/>
<circle cx="800.5" cy="270.5" r="50" fill="url(#gh)"/>
<path d="M571 229.5 Q586 226 590.5 219.5 Q592 217 590.5 215" fill="none" stroke="#ffff20" stroke-width="1.2"/>
<path d="M742 312 Q800 319 840 313 Q875 307 898 298.5 Q916 290 926.5 278.5 Q931.5 271.5 929 265" fill="none" stroke="#ff6a00" stroke-width="1.2"/>
<rect x="478.5" y="261.5" width="5" height="5" fill="#fff" stroke="#000" stroke-width="1"/>
</svg>
</div>

<div class="menu" style="left:477px;top:272px;width:152px;height:412px"><div class="in"></div><div class="gut" style="left:28px"></div>
<div class="msep" style="left:30px;right:2px;top:28px"></div>
<div class="msep" style="left:30px;right:2px;top:102px"></div>
<div class="msep" style="left:30px;right:2px;top:176px"></div>
<div class="msep" style="left:30px;right:2px;top:360px"></div>
<div class="hl" style="left:2px;top:180px;width:146px"></div>
<div class="arr" style="left:135px;top:187px"></div>
</div>
<div class="menu" style="left:623px;top:450px;width:170px;height:50px"><div class="in"></div><div class="gut" style="left:28px"></div>
<div class="hl" style="left:2px;top:24px;width:164px"></div>
<div class="arr" style="left:153px;top:9px"></div>
<div class="arr" style="left:153px;top:31px"></div>
</div>
<div class="menu" style="left:787px;top:472px;width:122px;height:50px"><div class="in"></div><div class="gut" style="left:28px"></div>
<div class="hl" style="left:2px;top:24px;width:116px"></div>
</div>

<div id="mtext">
<span class="mi" style="left:510.6px;top:275px;transform:scaleX(0.9607)">Properties...</span>
<span class="mi" style="left:510.6px;top:305px;transform:scaleX(1.0385)">Hide</span>
<span class="mi dis" style="left:510.6px;top:327px;transform:scaleX(0.9783)">Show</span>
<span class="mi" style="left:510.6px;top:349px;transform:scaleX(0.9021)">Freeze</span>
<span class="mi" style="left:510.6px;top:379px;transform:scaleX(1.0572)">Cut</span>
<span class="mi" style="left:510.6px;top:401px;transform:scaleX(1.0253)">Copy</span>
<span class="mi" style="left:510.6px;top:423px;transform:scaleX(0.9737)">Delete</span>
<span class="mi" style="left:510.6px;top:453px;transform:scaleX(1.0512)">Move To</span>
<span class="mi" style="left:510.6px;top:475px;transform:scaleX(0.9860)">Translate</span>
<span class="mi" style="left:510.6px;top:497px;transform:scaleX(0.9808)">Rotate</span>
<span class="mi" style="left:510.6px;top:519px;transform:scaleX(0.9163)">Scale</span>
<span class="mi" style="left:510.6px;top:541px;transform:scaleX(0.9938)">Array</span>
<span class="mi" style="left:510.6px;top:563px;transform:scaleX(0.9906)">Polymesh</span>
<span class="mi" style="left:510.6px;top:585px;transform:scaleX(1.0014)">Polygonize</span>
<span class="mi" style="left:510.6px;top:607px;transform:scaleX(0.9628)">Explode</span>
<span class="mi dis" style="left:510.6px;top:637px;transform:scaleX(0.9574)">Unlock LCS</span>
<span class="mi" style="left:510.6px;top:659px;transform:scaleX(0.9281)">Show LCS</span>
<span class="mi" style="left:656.8px;top:453px;transform:scaleX(0.9407)">CAD</span>
<span class="mi" style="left:656.8px;top:475px;transform:scaleX(0.9786)">Physical Optics</span>
<span class="mi" style="left:820.6px;top:475px;transform:scaleX(0.8398)">PEC_1</span>
<span class="mi" style="left:820.6px;top:497px;transform:scaleX(0.9232)">IMP_1</span>
</div>
</body></html>
